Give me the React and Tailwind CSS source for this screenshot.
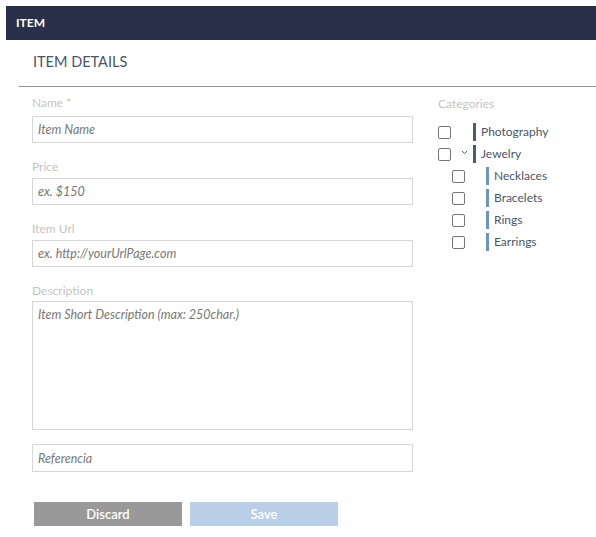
import React from 'react';

const categories = [
  { name: 'Photography', level: 0 },
  { name: 'Jewelry', level: 0, open: true },
  { name: 'Necklaces', level: 1 },
  { name: 'Bracelets', level: 1 },
  { name: 'Rings', level: 1 },
  { name: 'Earrings', level: 1 },
];

function Field({ label, placeholder, first }) {
  return (
    <div className="flex flex-col">
      <label className={`text-[12px] leading-[16px] text-[#c4c4c4] ${first ? 'mb-[5px]' : 'mb-[3px]'}`}>{label}</label>
      <input
        type="text"
        placeholder={placeholder}
        className="h-[27px] border border-[#d6d6d6] px-[5px] text-[12.5px] italic text-[#555] placeholder:text-[#777] outline-none"
      />
    </div>
  );
}

export default function App() {
  return (
    <div className="min-h-screen bg-white pt-[6px] pl-[6px]" style={{ fontFamily: 'Lato, "Open Sans", sans-serif' }}>
      {/* top bar */}
      <div className="h-[34px] bg-[#283149] flex items-center pl-[10px] text-white text-[12px] font-bold">
        ITEM
      </div>

      <div className="ml-[13px]">
        <div className="h-[47px] border-b border-[#8d95a5] flex items-center pl-[14px] pb-[3px] text-[14.5px] text-[#4a5568]">
          ITEM DETAILS
        </div>

        <div className="flex pl-[13px] pt-[8px]">
          {/* form column */}
          <div className="w-[381px] flex flex-col">
            <div className="flex flex-col gap-[16px]">
              <Field label="Name *" placeholder="Item Name" first />
              <Field label="Price" placeholder="ex. $150" />
              <Field label="Item Url" placeholder="ex. http://yourUrlPage.com" />
              <div className="flex flex-col">
                <label className="text-[12px] leading-[16px] text-[#c4c4c4] mb-[2px]">Description</label>
                <textarea
                  placeholder="Item Short Description (max: 250char.)"
                  className="h-[129px] resize-none border border-[#d6d6d6] px-[5px] py-[4px] text-[12.5px] italic placeholder:text-[#777] outline-none"
                />
              </div>
            </div>
            <input
              type="text"
              placeholder="Referencia"
              className="mt-[14px] h-[28px] border border-[#d6d6d6] px-[5px] text-[12.5px] italic placeholder:text-[#777] outline-none"
            />
            <div className="flex gap-[8px] ml-[2px] mt-[30px]">
              <button className="w-[148px] h-[24px] bg-[#999999] text-white text-[13px] font-semibold pt-[1px]">Discard</button>
              <button className="w-[148px] h-[24px] bg-[#b8cfe7] text-white text-[13px] font-semibold pt-[1px]">Save</button>
            </div>
          </div>

          {/* categories */}
          <div className="ml-[25px] flex flex-col pt-[1px]">
            <div className="text-[12px] leading-[16px] text-[#c4c4c4] mb-[9px]">Categories</div>
            {categories.map((c) => (
              <div key={c.name} className={`flex items-center h-[22px] ${c.level ? 'pl-[14px]' : ''}`}>
                <span className="w-[13px] h-[13px] border border-[#767676] rounded-[2px] bg-white" />
                <span className={`flex items-center justify-center pl-[4px] ${c.level ? 'w-[21px]' : 'w-[22px]'}`}>
                  {c.open && (
                    <svg width="7" height="5" viewBox="0 0 7 5" className="mb-[3px]">
                      <path d="M1 1 L3.5 3.5 L6 1" fill="none" stroke="#555" strokeWidth="1" />
                    </svg>
                  )}
                </span>
                <span className={`w-[3px] h-[18px] ${c.level ? 'bg-[#6a95c8]' : 'bg-[#4b5a78]'}`} />
                <span className="ml-[5px] text-[12px] text-[#4a5568]">{c.name}</span>
              </div>
            ))}
          </div>
        </div>
      </div>
    </div>
  );
}
